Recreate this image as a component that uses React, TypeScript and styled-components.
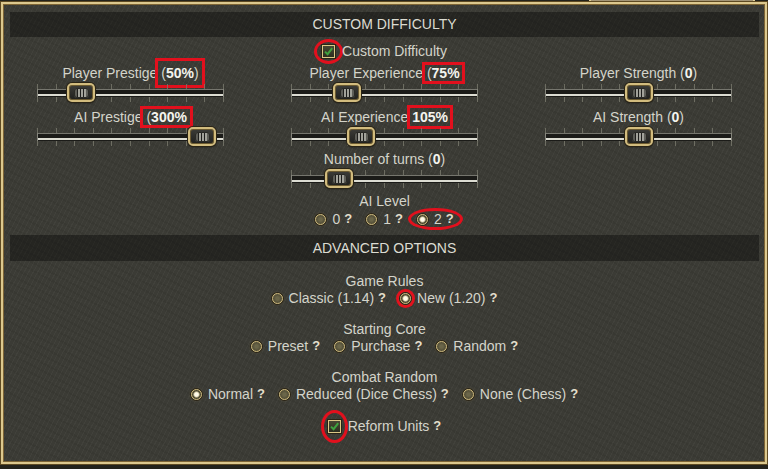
import React from 'react';
import styled, { createGlobalStyle } from 'styled-components';

const Global = createGlobalStyle`
  html, body { margin: 0; padding: 0; background: #23221b; }
  body {
    width: 768px; height: 469px; overflow: hidden;
    font-family: "Liberation Sans", Arial, sans-serif;
    -webkit-font-smoothing: antialiased;
  }
`;

const Screen = styled.div`
  width: 768px;
  height: 469px;
  display: flex;
  flex-direction: column;
  background: #23221b;
`;

const TopStrip = styled.div`
  height: 2px;
  flex: none;
  display: flex;
`;

const TopGap = styled.div<{ $w: number }>`
  width: ${(p) => p.$w}px;
  flex: none;
`;

const TopTab = styled.div`
  width: 162px;
  flex: none;
  background: #a39577;
  border-left: 2px solid #e2d19a;
  border-right: 2px solid #e2d19a;
`;

const Panel = styled.div`
  box-sizing: border-box;
  margin: 0 1px;
  height: 462px;
  flex: none;
  border: 2px solid #dcc88e;
  box-shadow: 0 0 0 1px #5e4a22, inset 0 0 0 1px #7d6434;
  background-color: #3b3b35;
  background-image:
    repeating-linear-gradient(118deg, rgba(255, 255, 255, 0.03) 0 1px, transparent 1px 4px),
    repeating-linear-gradient(28deg, rgba(0, 0, 0, 0.06) 0 2px, transparent 2px 7px);
  padding: 8px 6px 0 7px;
  display: flex;
  flex-direction: column;
  align-items: center;
  color: #d4d4ca;
  font-size: 14px;
  line-height: 16px;
`;

const Band = styled.div<{ $mt?: number; $h?: number }>`
  align-self: stretch;
  margin-top: ${(p) => p.$mt ?? 0}px;
  height: ${(p) => p.$h ?? 25}px;
  line-height: ${(p) => p.$h ?? 25}px;
  text-align: center;
  background: rgba(0, 0, 0, 0.36);
  color: #dcdcd2;
  font-size: 14px;
`;

const CheckRow = styled.div<{ $mt: number }>`
  margin-top: ${(p) => p.$mt}px;
  display: flex;
  align-items: center;
  gap: 7px;
  height: 16px;
`;

const Box = styled.span`
  width: 13px;
  height: 13px;
  box-sizing: border-box;
  flex: none;
  border: 1.5px solid #dcc886;
  background: linear-gradient(#474733, #2c2e20);
  box-shadow: 0 0 0 1px #2a2416;
  display: flex;
  align-items: center;
  justify-content: center;
`;

const Ring = styled.span<{ $px: number; $py: number }>`
  display: inline-flex;
  align-items: center;
  padding: ${(p) => p.$py}px ${(p) => p.$px}px;
  margin: -${(p) => p.$py}px -${(p) => p.$px}px;
  border-radius: 50%;
  box-shadow: 0 0 0 3px #e2101d;
`;

const Mark = styled.span<{ $px: number; $py: number }>`
  display: inline-block;
  padding: ${(p) => p.$py}px ${(p) => p.$px}px;
  margin: -${(p) => p.$py}px -${(p) => p.$px}px;
  box-shadow: 0 0 0 3px #e2101d;
`;

const Val = styled.b`
  font-weight: bold;
  color: #f4f4ee;
`;

const SliderGrid = styled.div`
  margin-top: 6px;
  display: grid;
  grid-template-columns: repeat(3, 240px);
  column-gap: 14px;
  justify-content: center;
`;

const Group = styled.div<{ $mt?: number }>`
  margin-top: ${(p) => p.$mt ?? 0}px;
  display: flex;
  flex-direction: column;
  align-items: center;
`;

const Label = styled.div`
  height: 16px;
  white-space: nowrap;
  text-align: center;
`;

const SliderBox = styled.div`
  position: relative;
  width: 187px;
  height: 28px;
  background-image: repeating-linear-gradient(90deg, rgba(125, 125, 112, 0.75) 0 1px, transparent 1px 18.6px);
  background-size: 100% 18px;
  background-position: 0 3px;
  background-repeat: no-repeat;
`;

const Track = styled.div`
  margin-top: 8px;
  height: 8px;
  box-sizing: border-box;
  border-left: 1px solid #85857c;
  border-right: 1px solid #85857c;
  background: linear-gradient(#76766e 0 1px, #1b1b18 1px 5px, #dcdcd2 5px 7px, #1b1b18 7px);
`;

const Thumb = styled.span`
  position: absolute;
  top: 2px;
  width: 28px;
  height: 19px;
  box-sizing: border-box;
  border-radius: 5px;
  border: 2px solid #d2bc7e;
  background: linear-gradient(#3c3c38, #1f1f1d);
  box-shadow: 0 0 0 1px #2a2416, inset 0 0 0 1px #6b5a30, 0 1px 2px rgba(0, 0, 0, 0.6);
  display: flex;
  align-items: center;
  justify-content: center;
`;

const Grip = styled.span`
  width: 15px;
  height: 10px;
  border-radius: 3px;
  background: linear-gradient(
    90deg,
    #5e5e58 0 3px,
    #1e1e1c 3px 4px,
    #a2a29a 4px 6px,
    #1e1e1c 6px 7px,
    #a2a29a 7px 9px,
    #1e1e1c 9px 10px,
    #a2a29a 10px 12px,
    #5e5e58 12px
  );
  box-shadow: inset 0 0 0 1px #2a2a26;
`;

const Caption = styled.div<{ $mt: number }>`
  margin-top: ${(p) => p.$mt}px;
  height: 16px;
  white-space: nowrap;
`;

const OptionRow = styled.div<{ $mt: number }>`
  margin-top: ${(p) => p.$mt}px;
  height: 16px;
  display: flex;
  align-items: center;
  justify-content: center;
  gap: 14px;
  white-space: nowrap;
`;

const Option = styled.span`
  display: inline-flex;
  align-items: center;
  gap: 6px;
`;

const Radio = styled.span<{ $on?: boolean }>`
  width: 11px;
  height: 11px;
  box-sizing: border-box;
  flex: none;
  border-radius: 50%;
  border: 1.5px solid #cfba7c;
  background: ${(p) =>
    p.$on
      ? 'radial-gradient(circle, #fffbea 0 1.8px, #d9d0ac 2.4px, #4d4932 3.6px)'
      : 'radial-gradient(circle, #6b6649 0 1.5px, #57523a 3.6px)'};
  box-shadow: 0 0 0 1px #2a2416, 0 0 3px rgba(225, 195, 120, 0.35);
`;

const Help = styled.span`
  margin-left: -2px;
  font-size: 13px;
  font-weight: bold;
  color: #e4dfcc;
`;

const Block = styled.div<{ $mt: number }>`
  margin-top: ${(p) => p.$mt}px;
  display: flex;
  flex-direction: column;
  align-items: center;
`;

const Check = () => (
  <Box>
    <svg width="9" height="9" viewBox="0 0 9 9">
      <path d="M1 4.6 L3.6 7.2 L8.2 1.2" fill="none" stroke="#3fa23f" strokeWidth="2" />
    </svg>
  </Box>
);

const Slider = ({ at }: { at: number }) => (
  <SliderBox>
    <Track />
    <Thumb style={{ left: `${Math.round(at * 187 - 14)}px` }}>
      <Grip />
    </Thumb>
  </SliderBox>
);

const Opt = ({ on, children }: { on?: boolean; children: React.ReactNode }) => (
  <Option>
    <Radio $on={on} />
    {children}
    <Help>?</Help>
  </Option>
);

export default function App() {
  return (
    <Screen>
      <Global />
      <TopStrip>
        <TopGap $w={589} />
        <TopTab />
      </TopStrip>
      <Panel>
        <Band>CUSTOM DIFFICULTY</Band>
        <CheckRow $mt={6}>
          <Ring $px={5} $py={3}>
            <Check />
          </Ring>
          <span>Custom Difficulty</span>
        </CheckRow>

        <SliderGrid>
          <Group>
            <Label>
              Player Prestige{' '}
              <Mark $px={3} $py={4}>
                (<Val>50%</Val>)
              </Mark>
            </Label>
            <Slider at={0.235} />
          </Group>
          <Group>
            <Label>
              Player Experience{' '}
              <Mark $px={2} $py={0}>
                (<Val>75%</Val>
              </Mark>
            </Label>
            <Slider at={0.3} />
          </Group>
          <Group>
            <Label>
              Player Strength (<Val>0</Val>)
            </Label>
            <Slider at={0.5} />
          </Group>
          <Group>
            <Label>
              AI Prestige{' '}
              <Mark $px={3} $py={0}>
                (<Val>300%</Val>
              </Mark>
            </Label>
            <Slider at={0.885} />
          </Group>
          <Group>
            <Label>
              AI Experience{' '}
              <Mark $px={2} $py={1}>
                <Val>105%</Val>
              </Mark>
            </Label>
            <Slider at={0.375} />
          </Group>
          <Group>
            <Label>
              AI Strength (<Val>0</Val>)
            </Label>
            <Slider at={0.5} />
          </Group>
        </SliderGrid>

        <Group $mt={-2}>
          <Label>
            Number of turns (<Val>0</Val>)
          </Label>
          <Slider at={0.257} />
        </Group>

        <Caption $mt={-2}>AI Level</Caption>
        <OptionRow $mt={2}>
          <Opt>0</Opt>
          <Opt>1</Opt>
          <Ring $px={6} $py={0}>
            <Opt on>2</Opt>
          </Ring>
        </OptionRow>

        <Band $mt={8} $h={26}>ADVANCED OPTIONS</Band>

        <Block $mt={12}>
          <Caption $mt={0}>Game Rules</Caption>
          <OptionRow $mt={1}>
            <Opt>Classic (1.14)</Opt>
            <Option>
              <Ring $px={1} $py={1}>
                <Radio $on />
              </Ring>
              New (1.20)
              <Help>?</Help>
            </Option>
          </OptionRow>
        </Block>

        <Block $mt={15}>
          <Caption $mt={0}>Starting Core</Caption>
          <OptionRow $mt={1}>
            <Opt>Preset</Opt>
            <Opt>Purchase</Opt>
            <Opt>Random</Opt>
          </OptionRow>
        </Block>

        <Block $mt={15}>
          <Caption $mt={0}>Combat Random</Caption>
          <OptionRow $mt={1}>
            <Opt on>Normal</Opt>
            <Opt>Reduced (Dice Chess)</Opt>
            <Opt>None (Chess)</Opt>
          </OptionRow>
        </Block>

        <CheckRow $mt={16}>
          <Ring $px={4} $py={7}>
            <Check />
          </Ring>
          <Option>
            Reform Units
            <Help>?</Help>
          </Option>
        </CheckRow>
      </Panel>
    </Screen>
  );
}
